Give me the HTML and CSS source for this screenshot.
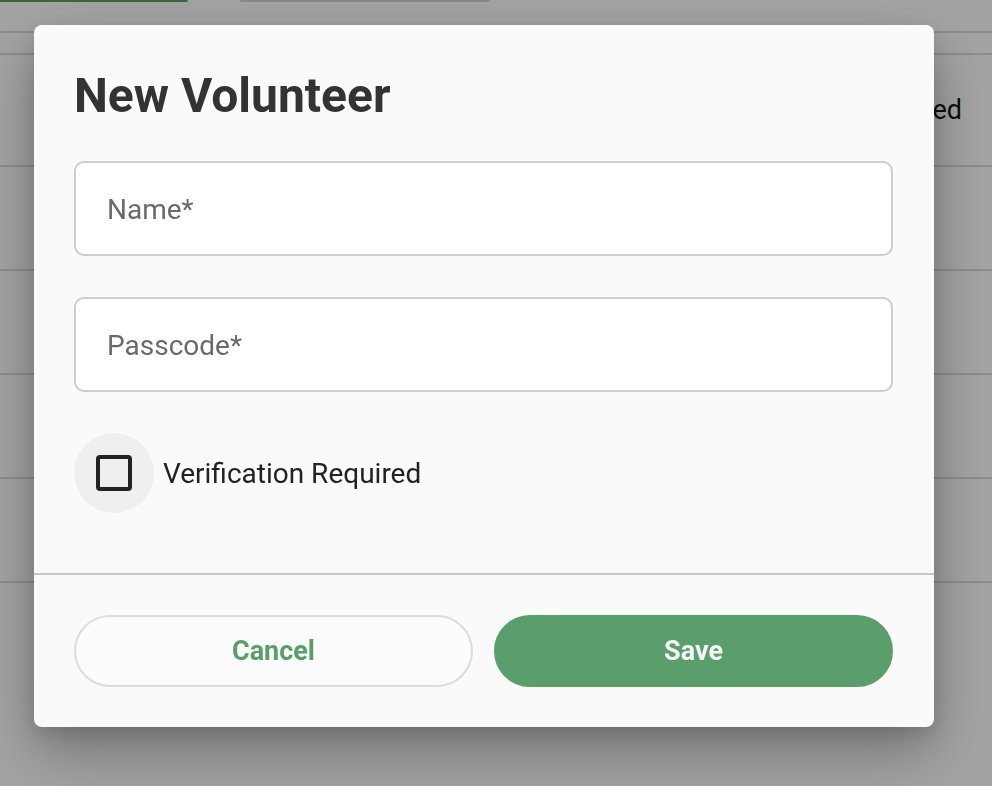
FILE: index.html
```html
<!DOCTYPE html>
<html>
<head>
<meta charset="utf-8">
<link rel="stylesheet" href="styles.css">
</head>
<body>
<div class="page">
  <div class="topbar">
    <div class="btn-green"></div>
    <div class="btn-grey"></div>
  </div>
  <div class="subbar"></div>
  <div class="thead"><span class="th">Required</span></div>
  <div class="row"></div>
  <div class="row"></div>
  <div class="row"></div>
  <div class="row"></div>
</div>

<div class="overlay">
  <div class="dialog">
    <div class="dialog-body">
      <h1 class="title">New Volunteer</h1>
      <div class="field"><input class="input" type="text" placeholder="Name*"></div>
      <div class="field"><input class="input" type="text" placeholder="Passcode*"></div>
      <label class="check-row">
        <span class="check-ripple"><span class="check-box"></span></span>
        <span class="check-label">Verification Required</span>
      </label>
    </div>
    <div class="dialog-footer">
      <button class="btn btn-cancel">Cancel</button>
      <button class="btn btn-save">Save</button>
    </div>
  </div>
</div>
</body>
</html>
```

FILE: styles.css
```css
* { box-sizing: border-box; }
html, body { margin: 0; padding: 0; }
body {
  width: 992px;
  height: 786px;
  overflow: hidden;
  background: #ffffff;
  font-family: Roboto, "Liberation Sans", sans-serif;
}

.page { width: 992px; }
.topbar {
  height: 33px;
  border-bottom: 2px solid #dcdcdc;
  display: flex;
  align-items: flex-start;
  gap: 52px;
}
.btn-green {
  width: 192px;
  height: 2px;
  margin-left: -4px;
  background: #5a9f6b;
  border-radius: 0 0 12px 12px;
}
.btn-grey {
  width: 250px;
  height: 2px;
  background: #d6d6d6;
  border-radius: 0 0 12px 12px;
}
.subbar {
  height: 22px;
  border-bottom: 2px solid #dcdcdc;
}
.thead {
  height: 112px;
  border-bottom: 2px solid #dcdcdc;
  display: flex;
  justify-content: flex-end;
  align-items: center;
  padding-right: 30px;
  padding-top: 0;
}
.th {
  font-size: 27px;
  color: #141414;
}
.row {
  height: 104px;
  border-bottom: 2px solid #dcdcdc;
}

.overlay {
  position: fixed;
  inset: 0;
  background: rgba(0, 0, 0, 0.36);
  padding: 25px 0 0 34px;
}
.dialog {
  width: 900px;
  height: 702px;
  background: #fafafa;
  border-radius: 8px;
  box-shadow: 0 24px 60px rgba(0, 0, 0, 0.3), 0 8px 20px rgba(0, 0, 0, 0.12);
  display: flex;
  flex-direction: column;
}
.dialog-body {
  padding: 43px 41px 60px 40px;
  border-bottom: 2px solid #c8c8c8;
}
.title {
  margin: 0 0 37px 0;
  font-size: 48px;
  line-height: 56px;
  font-weight: 700;
  color: #333333;
}
.field { margin-bottom: 41px; }
.input {
  display: block;
  width: 100%;
  height: 95px;
  border: 2px solid #cdcdcd;
  border-radius: 10px;
  background: #ffffff;
  padding: 2px 31px 0 31px;
  font-family: Roboto, "Liberation Sans", sans-serif;
  font-size: 28px;
  color: #333;
  outline: none;
}
.input::placeholder { color: #6a6a6a; }

.check-row {
  display: flex;
  align-items: center;
  gap: 9px;
}
.check-ripple {
  width: 80px;
  height: 80px;
  border-radius: 50%;
  background: #efefef;
  display: flex;
  align-items: center;
  justify-content: center;
}
.check-box {
  width: 36px;
  height: 36px;
  border: 4px solid #222222;
  border-radius: 4px;
}
.check-label {
  font-size: 28px;
  color: #222222;
}

.dialog-footer {
  padding: 40px 41px 40px 40px;
  display: flex;
  gap: 21px;
}
.btn {
  flex: 1;
  height: 72px;
  border-radius: 36px;
  font-family: Roboto, "Liberation Sans", sans-serif;
  font-size: 27px;
  font-weight: 700;
  cursor: pointer;
}
.btn-cancel {
  background: #fcfcfc;
  border: 2px solid #dcdcdc;
  color: #5a9f6b;
}
.btn-save {
  background: #5a9f6b;
  border: 2px solid #5a9f6b;
  color: #f4f4f4;
}
```
